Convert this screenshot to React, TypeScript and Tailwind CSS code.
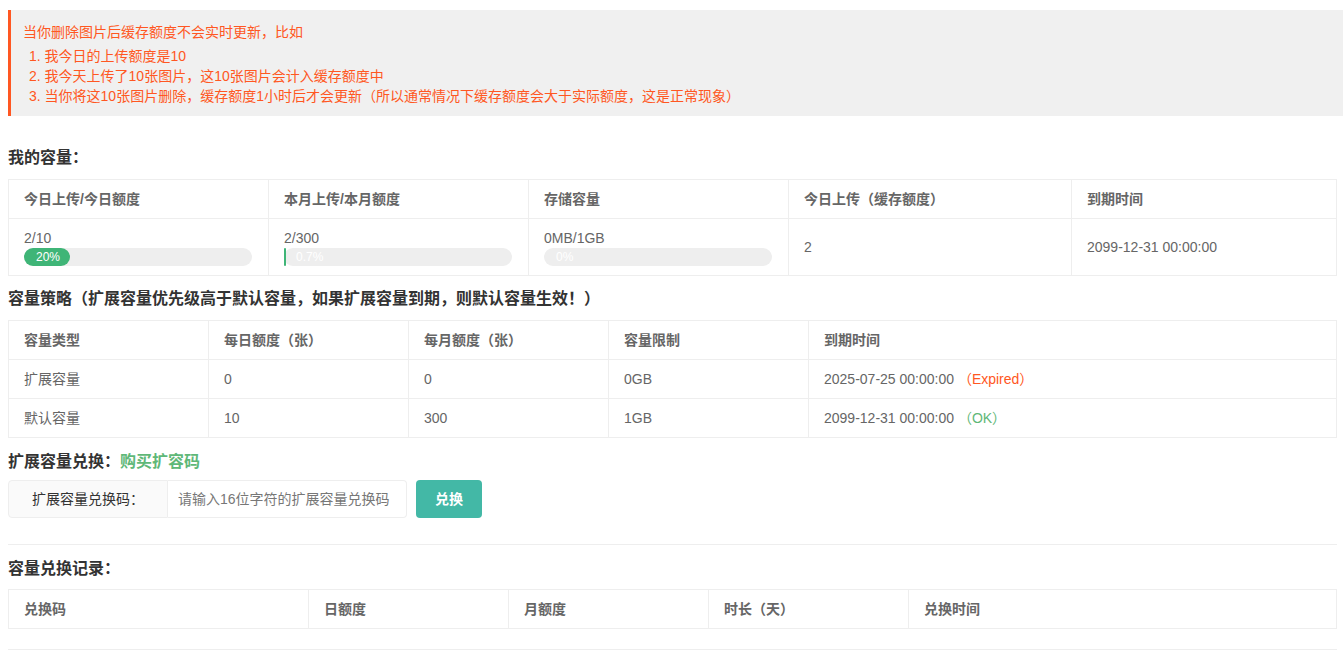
const font = { fontFamily: '"Liberation Sans", "Noto Sans CJK SC", sans-serif' };

function Bar({ pct, label }: { pct: number; label: string }) {
  return (
    <div className="relative h-[18px] w-[228px] rounded-full bg-[#eeeeee]">
      <div className="h-[18px] rounded-full bg-[#3fb577]" style={{ width: `${pct}%`, minWidth: pct > 0 ? 2 : 0 }} />
      <span className="absolute left-3 top-0 text-[12px] leading-[18px] text-white">{label}</span>
    </div>
  );
}

const th = "border border-[#eeeeee] px-[15px] py-[9px] text-left font-bold leading-5 text-[#666]";
const td = "border border-[#eeeeee] px-[15px] py-[9px] leading-5 text-[#666]";

export default function App() {
  return (
    <div className="min-h-screen bg-white pl-2 pr-[6px] pt-[10px] text-sm" style={font}>
      {/* notice */}
      <div className="-mr-[6px] border-l-[3px] border-[#ff5722] bg-[#f0f0f0] pl-3 pt-3 pb-[10px] text-[14px] leading-5 text-[#ff5722]">
        <p>当你删除图片后缓存额度不会实时更新，比如</p>
        <ol className="mt-1 pl-[6px]">
          <li>1. 我今日的上传额度是10</li>
          <li>2. 我今天上传了10张图片，这10张图片会计入缓存额度中</li>
          <li>3. 当你将这10张图片删除，缓存额度1小时后才会更新（所以通常情况下缓存额度会大于实际额度，这是正常现象）</li>
        </ol>
      </div>

      <h3 className="mt-[30px] mb-[9px] text-base font-bold leading-6 text-[#333]">我的容量：</h3>
      <table className="w-full table-fixed border-collapse">
        <colgroup>
          <col className="w-[260px]" />
          <col className="w-[260px]" />
          <col className="w-[260px]" />
          <col className="w-[283px]" />
          <col />
        </colgroup>
        <thead>
          <tr>
            <th className={th}>今日上传/今日额度</th>
            <th className={th}>本月上传/本月额度</th>
            <th className={th}>存储容量</th>
            <th className={th}>今日上传（缓存额度）</th>
            <th className={th}>到期时间</th>
          </tr>
        </thead>
        <tbody>
          <tr>
            <td className={td}>
              <div>2/10</div>
              <Bar pct={20} label="20%" />
            </td>
            <td className={td}>
              <div>2/300</div>
              <Bar pct={0.7} label="0.7%" />
            </td>
            <td className={td}>
              <div>0MB/1GB</div>
              <Bar pct={0} label="0%" />
            </td>
            <td className={td}>2</td>
            <td className={td}>2099-12-31 00:00:00</td>
          </tr>
        </tbody>
      </table>

      <h3 className="mt-[11px] mb-[9px] text-base font-bold leading-6 text-[#333]">
        容量策略（扩展容量优先级高于默认容量，如果扩展容量到期，则默认容量生效！）
      </h3>
      <table className="w-full table-fixed border-collapse">
        <colgroup>
          <col className="w-[200px]" />
          <col className="w-[200px]" />
          <col className="w-[200px]" />
          <col className="w-[200px]" />
          <col />
        </colgroup>
        <thead>
          <tr>
            <th className={th}>容量类型</th>
            <th className={th}>每日额度（张）</th>
            <th className={th}>每月额度（张）</th>
            <th className={th}>容量限制</th>
            <th className={th}>到期时间</th>
          </tr>
        </thead>
        <tbody>
          <tr>
            <td className={td}>扩展容量</td>
            <td className={td}>0</td>
            <td className={td}>0</td>
            <td className={td}>0GB</td>
            <td className={td}>
              2025-07-25 00:00:00 <span className="text-[#ff5722]">（Expired）</span>
            </td>
          </tr>
          <tr>
            <td className={td}>默认容量</td>
            <td className={td}>10</td>
            <td className={td}>300</td>
            <td className={td}>1GB</td>
            <td className={td}>
              2099-12-31 00:00:00 <span className="text-[#5fb878]">（OK）</span>
            </td>
          </tr>
        </tbody>
      </table>

      <h3 className="mt-3 mb-[6px] text-base font-bold leading-6 text-[#333]">
        扩展容量兑换：<a className="text-[#5fb878]">购买扩容码</a>
      </h3>
      <div className="flex items-center">
        <div className="flex h-[38px] w-[160px] items-center justify-center rounded-l-sm border border-[#eeeeee] bg-[#fafafa] text-[#333]">
          扩展容量兑换码：
        </div>
        <input
          className="h-[38px] w-[239px] rounded-r-sm border border-l-0 border-[#eeeeee] px-[10px] text-sm text-[#666] outline-none placeholder:text-[#777]"
          placeholder="请输入16位字符的扩展容量兑换码"
        />
        <button className="ml-[9px] h-[38px] w-[66px] rounded-sm bg-[#43b8a6] text-sm font-semibold text-white">兑换</button>
      </div>

      <hr className="mt-[26px] border-t border-[#eeeeee]" />

      <h3 className="mt-3 mb-2 text-base font-bold leading-6 text-[#333]">容量兑换记录：</h3>
      <table className="w-full table-fixed border-collapse">
        <colgroup>
          <col className="w-[300px]" />
          <col className="w-[200px]" />
          <col className="w-[200px]" />
          <col className="w-[200px]" />
          <col />
        </colgroup>
        <thead>
          <tr>
            <th className={th}>兑换码</th>
            <th className={th}>日额度</th>
            <th className={th}>月额度</th>
            <th className={th}>时长（天）</th>
            <th className={th}>兑换时间</th>
          </tr>
        </thead>
      </table>

      <hr className="mt-5 border-t border-[#eeeeee]" />
    </div>
  );
}
